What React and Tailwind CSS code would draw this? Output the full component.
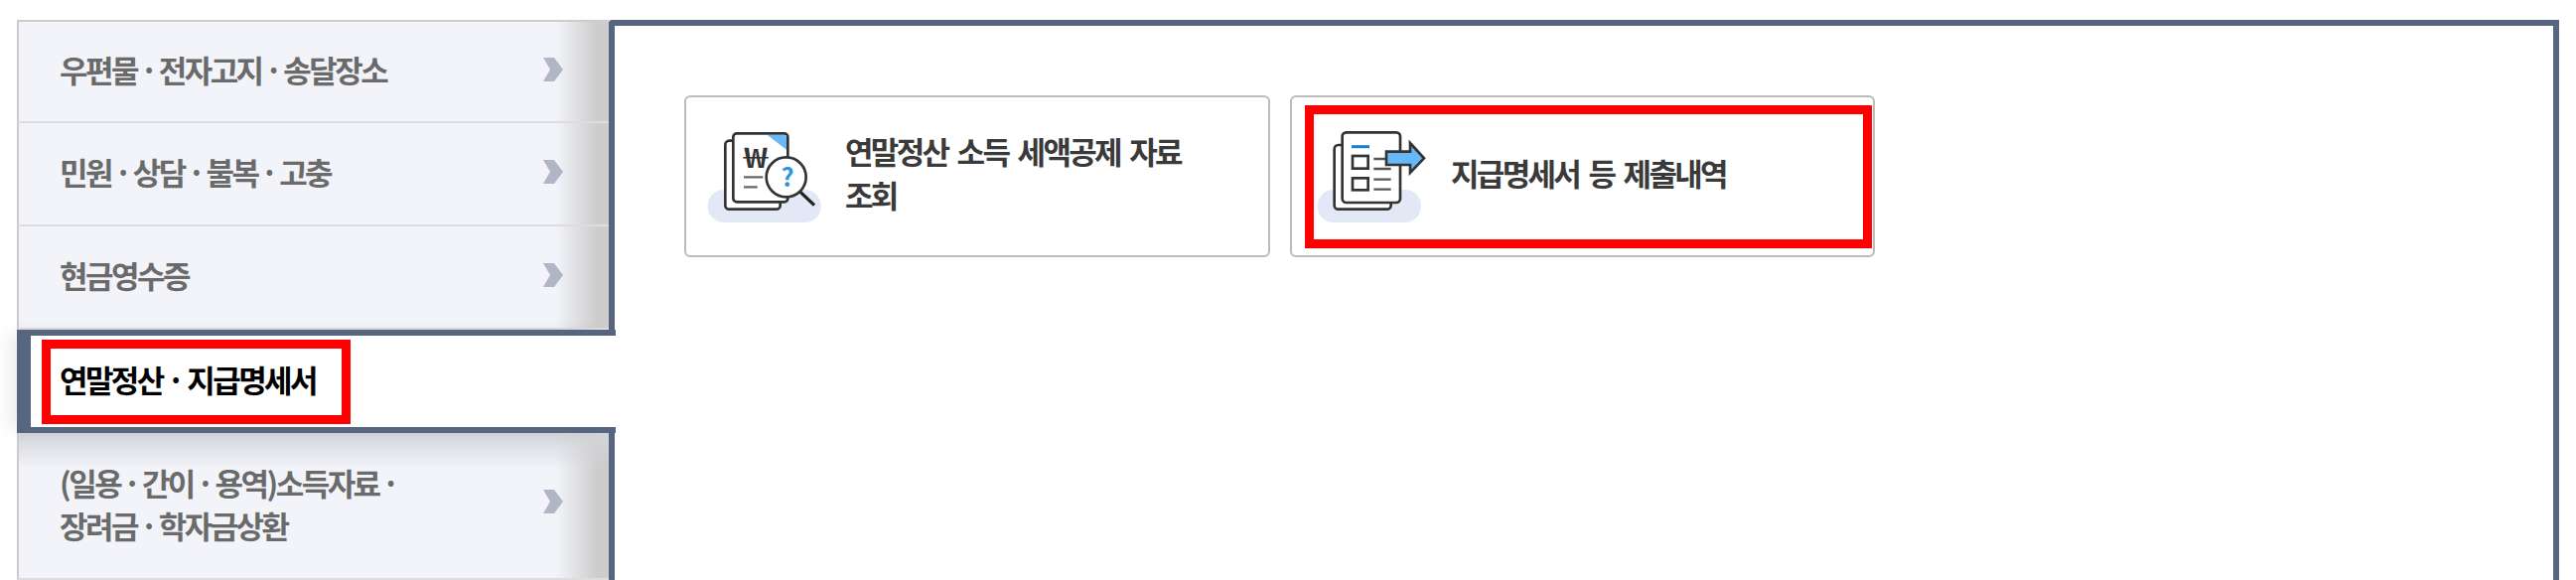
const menuItems = [
  { label: "우편물 · 전자고지 · 송달장소" },
  { label: "민원 · 상담 · 불복 · 고충" },
  { label: "현금영수증" },
];

const Chevron = () => (
  <svg width="20" height="24" viewBox="0 0 20 24" className="shrink-0 -mt-1">
    <polygon points="0,0 11,0 20,12 11,24 0,24 7,12" fill="#b1b6c6" />
  </svg>
);

const TaxIcon = () => (
  <svg width="120" height="100" viewBox="90 150 360 300" className="shrink-0">
    <rect x="98" y="333" width="342" height="99" rx="48" fill="#e2e8f5" />
    <path d="M175 185h-12a12 12 0 0 0-12 12v183a12 12 0 0 0 12 12h142a12 12 0 0 0 12-12v-8" fill="#fff" stroke="#333" strokeWidth="8" />
    <rect x="175" y="163" width="165" height="207" rx="11" fill="#fff" stroke="#333" strokeWidth="8" />
    <polygon points="278,168 330,168 336,174 336,212" fill="#6bb8f5" />
    <text x="241" y="268" textAnchor="middle" fontSize="84" fontWeight="500" fill="#333" textLength="68" lengthAdjust="spacingAndGlyphs" fontFamily="'Noto Sans CJK KR', sans-serif">₩</text>
    <path d="M207 295h58M207 325h41" stroke="#666" strokeWidth="7" />
    <path d="M378 340l42 40" stroke="#222" strokeWidth="10" />
    <circle cx="335" cy="295" r="60" fill="#fff" stroke="#333" strokeWidth="8" />
    <text x="338" y="323" textAnchor="middle" fontSize="76" fontWeight="700" fill="#2f93e0" fontFamily="'Noto Sans CJK KR', sans-serif">?</text>
  </svg>
);

const ReportIcon = () => (
  <svg width="120" height="100" viewBox="90 150 360 300" className="shrink-0">
    <rect x="110" y="333" width="313" height="99" rx="48" fill="#e2e8f5" />
    <path d="M185 198h-12a12 12 0 0 0-12 12v170a12 12 0 0 0 12 12h147a12 12 0 0 0 12-12v-10" fill="#fff" stroke="#333" strokeWidth="8" />
    <rect x="185" y="160" width="175" height="212" rx="12" fill="#fff" stroke="#333" strokeWidth="8" />
    <path d="M213 203h54" stroke="#1a7fd0" strokeWidth="9" />
    <rect x="216" y="231" width="47" height="38" fill="#fff" stroke="#333" strokeWidth="8" />
    <rect x="216" y="298" width="47" height="36" fill="#fff" stroke="#333" strokeWidth="8" />
    <path d="M280 240h52M280 270h52M280 302h52M280 332h52" stroke="#555" strokeWidth="7" />
    <polygon points="318,218 390,218 390,192 432,238 390,282 390,258 318,258" fill="#66b8f8" stroke="#333" strokeWidth="8" />
  </svg>
);

const App = () => {
  return (
    <div className="w-[2594px] h-[584px] overflow-hidden bg-white flex pt-5 pl-[17px] font-['Noto_Sans_CJK_KR',sans-serif]">
      {/* Left menu */}
      <div className="w-[596px] shrink-0 flex flex-col relative z-10">
        <div className="border-t-2 border-[#cccccc]" />
        {menuItems.map((item, i) => (
          <div
            key={item.label}
            className={`${i === 0 ? "h-[102px]" : "h-[104px]"} flex items-center justify-between pl-[41px] pr-[46px] border-l-2 border-b-2 border-l-[#cccccc] border-b-[#dddddd] bg-linear-to-r from-[#f3f4fa] from-[91%] to-[#cdcdcd] to-[98%] text-[31px] font-bold tracking-[-2.55px] [word-spacing:-1.5px] text-[#6a6a6a]`}
          >
            <span className="-mt-1">{item.label}</span>
            <Chevron />
          </div>
        ))}

        {/* Active tab, covers the panel border */}
        <div className="relative w-[603px] h-[104px] flex items-center bg-white border-y-[6px] border-l-[14px] border-[#586580] pl-[29px] text-[31px] font-bold tracking-[-2.6px] text-black shadow-[-12px_0_16px_-4px_rgba(0,0,0,0.08)]">
          <span className="-mt-1">연말정산 · 지급명세서</span>
          <div className="absolute left-[11px] top-1 w-[311px] h-[85px] border-[9px] border-[#ff0000]" />
        </div>

        <div className="h-[148px] flex items-center justify-between pl-[41px] pr-[46px] pb-1 border-l-2 border-b-2 border-l-[#cccccc] border-b-[#dddddd] bg-[linear-gradient(to_bottom,#d4d5da,#f3f4fa00_36px),linear-gradient(to_right,#f3f4fa_91%,#cdcdcd_98%)] text-[31px] font-bold leading-[43px] tracking-[-2.55px] [word-spacing:-1.5px] text-[#6a6a6a]">
          <span>
            (일용 · 간이 · 용역)소득자료 ·
            <br />
            장려금 · 학자금상환
          </span>
          <Chevron />
        </div>
      </div>

      {/* Right panel */}
      <div className="w-[1964px] h-[564px] shrink-0 border-x-[6px] border-t-[6px] border-[#586580] rounded-tl-sm pl-[70px] pt-[70px]">
        <div className="flex gap-5">
          <div className="w-[590px] h-[163px] flex items-center gap-[21px] pl-[19px] pr-10 pt-1 bg-white border-2 border-[#bbbbbb] rounded-md text-[31px] font-bold leading-[44px] tracking-[-2.7px] [word-spacing:5px] text-[#3a3a3a]">
            <TaxIcon />
            <span className="-mt-3">
              연말정산 소득 세액공제 자료
              <br />
              조회
            </span>
          </div>
          <div className="relative w-[589px] h-[163px] flex items-center gap-[21px] pl-[19px] pr-10 pt-1 bg-white border-2 border-[#bbbbbb] rounded-md text-[31px] font-bold leading-[44px] tracking-[-2.7px] [word-spacing:5px] text-[#3a3a3a]">
            <ReportIcon />
            <span className="-mt-3">지급명세서 등 제출내역</span>
            <div className="absolute left-[13px] top-2 w-[571px] h-[144px] border-[9px] border-[#ff0000]" />
          </div>
        </div>
      </div>
    </div>
  );
};

export default App;
